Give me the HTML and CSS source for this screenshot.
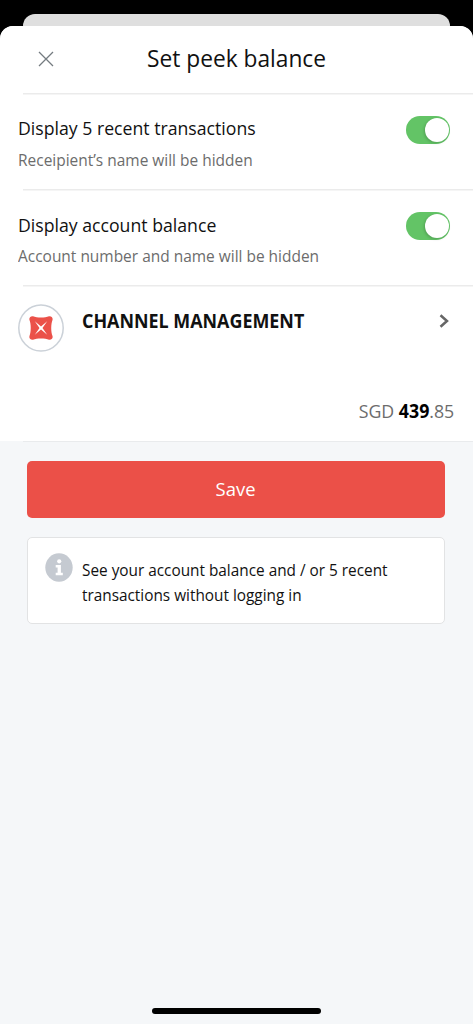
FILE: index.html
```html
<!DOCTYPE html>
<html lang="en">
<head>
<meta charset="utf-8">
<meta name="viewport" content="width=device-width, initial-scale=1">
<title>Set peek balance</title>
<link rel="stylesheet" href="styles.css">
</head>
<body>
<div class="screen">
  <div class="back-sheet"></div>
  <main class="sheet">
    <header class="header">
      <svg class="close" viewBox="0 0 16 16" width="16" height="16"><path d="M1 1L15 15M15 1L1 15"/></svg>
      <h1 class="title"><span class="fit">Set peek balance</span></h1>
    </header>
    <section class="setting">
      <div class="labels">
        <div class="label"><span class="fit">Display 5 recent transactions</span></div>
        <div class="hint"><span class="fit">Receipient’s name will be hidden</span></div>
      </div>
      <div class="toggle"><div class="knob"></div></div>
    </section>
    <section class="setting">
      <div class="labels">
        <div class="label"><span class="fit">Display account balance</span></div>
        <div class="hint"><span class="fit">Account number and name will be hidden</span></div>
      </div>
      <div class="toggle"><div class="knob"></div></div>
    </section>
    <section class="account">
      <div class="account-row">
        <svg class="logo" viewBox="0 0 46 48" width="46" height="48">
          <ellipse class="ring" cx="23" cy="24" rx="22.2" ry="23.1"/>
          <path class="mark" d="M15 12.2C19 14 27 14 31 12.2C33.500 12 35 13.500 34.600 15.800C32.800 20 32.800 28 34.600 32.200C35 34.500 33.500 36 31 35.800C27 34 19 34 15 35.800C12.500 36 11 34.500 11.400 32.200C13.200 28 13.200 20 11.400 15.800C11 13.500 12.500 12 15 12.200Z"/>
          <path class="star" d="M16.800 17.300L23 22.600L29.200 17.300L24.500 24L29.200 30.700L23 25.400L16.800 30.700L21.500 24Z"/>
        </svg>
        <div class="name"><span class="fit">CHANNEL MANAGEMENT</span></div>
        <svg class="chevron" viewBox="0 0 10 14" width="10" height="14"><path d="M1.500 1.200L8 7L1.500 12.800"/></svg>
      </div>
      <div class="amount"><span class="fit">SGD <b>439</b>.85</span></div>
    </section>
    <section class="actions">
      <button class="save"><span class="fit">Save</span></button>
      <div class="notice">
        <svg class="info" viewBox="0 0 28 29" width="28" height="29">
          <ellipse cx="14" cy="14.500" rx="13.700" ry="14.300"/>
          <circle class="glyph" cx="14.200" cy="8.300" r="2.100"/>
          <path class="glyph" d="M10.700 12H15.900V19.800H17.800V22.200H10.700V19.800H12.600V14.400H10.700Z"/>
        </svg>
        <p class="notice-text"><span class="fit">See your account balance and / or 5 recent<br>transactions without logging in</span></p>
      </div>
    </section>
    <div class="home-bar"></div>
  </main>
</div>
</body>
</html>
```
FILE: styles.css
```css
* { box-sizing: border-box; }
body { margin: 0; background: #000; font-family: "Open Sans", "Noto Sans", sans-serif; color: #111; }
.screen { width: 473px; height: 1024px; padding-top: 14px; display: flex; flex-direction: column; overflow: hidden; }
.back-sheet { height: 27px; margin: 0 23px -15px; background: #dfdfdf; border-radius: 12px 12px 0 0; flex: none; }
.sheet { flex: 1; background: #f5f7f9; border-radius: 13px 13px 0 0; overflow: hidden; display: flex; flex-direction: column; }
.fit { display: inline-block; white-space: nowrap; transform: scaleX(.93); transform-origin: left center; }
.header { height: 67px; background: #fff; display: flex; align-items: center; padding: 0 0 1px 37.500px; flex: none; }
.close { fill: none; stroke: #747b80; stroke-width: 1.300; }
.title { margin: -2px 0 0 93px; font-size: 24px; font-weight: 400; line-height: 32px; }
.title .fit { transform: scaleX(.947); }
.setting { height: 96px; flex: none; background: #fff linear-gradient(#ebebeb, #ebebeb) 23px 0 / 450px 1.500px no-repeat; display: flex; justify-content: space-between; padding: 23px 23px 0 18px; }
.label { font-size: 19px; line-height: 26px; margin-top: -1px; }
.setting + .setting .label { margin: 0 0 -1px; }
.hint { font-size: 16.500px; line-height: 24px; margin-top: 7px; color: #6c6c6c; }
.hint .fit { transform: scaleX(.937); }
.toggle { width: 44px; height: 28px; border-radius: 14px; background: #63c466; padding: 2px 1px; display: flex; justify-content: flex-end; }
.knob { width: 24px; height: 24px; border-radius: 50%; background: #fff; box-shadow: -1px 1px 3px rgba(0,0,0,.18); }
.account { height: 156px; flex: none; background: #fff linear-gradient(#ebebeb, #ebebeb) 23px 0 / 450px 1.500px no-repeat; padding: 19px 18px 0; }
.account-row { height: 83px; display: flex; align-items: flex-start; }
.logo { flex: none; }
.ring { fill: #fff; stroke: #cbd1d8; stroke-width: 1.500; }
.mark { fill: #eb5149; }
.star { fill: #fff; }
.name { flex: 1; margin-left: 18px; font-size: 19px; font-weight: 700; line-height: 26px; margin-top: 4px; }
.name .fit { transform: scaleX(.942); }
.chevron { margin: 10px 6px 0 0; fill: none; stroke: #666; stroke-width: 2.500; }
.amount { font-size: 19px; line-height: 26px; margin: 11px .5px 0 0; text-align: right; color: #6c6c6c; }
.amount .fit { transform: scaleX(.935); transform-origin: right center; }
.amount b { color: #000; }
.actions { flex: 1; padding: 20px 27px 0; background: linear-gradient(#e9ebed, #e9ebed) 23px 0 / 450px 1px no-repeat; }
.save { display: block; width: 418px; height: 57px; border: 0; border-radius: 5px; background: #eb5048; color: #fff; font: 500 19px "Open Sans", "Noto Sans", sans-serif; padding: 0 0 1px; }
.save .fit { transform: scaleX(.97); transform-origin: center; }
.notice { width: 418px; margin-top: 19px; height: 87px; background: #fff; border: 1.500px solid #e2e3e4; border-radius: 5px; display: flex; padding: 15px 0 0 17px; }
.info { flex: none; fill: #c5cad1; }
.glyph { fill: #fff; }
.notice-text { margin: 5px 0 0 9px; font-size: 16.500px; line-height: 24.500px; }
.home-bar { width: 169px; height: 6px; border-radius: 3px; background: #000; align-self: center; margin-bottom: 10px; flex: none; }
```
